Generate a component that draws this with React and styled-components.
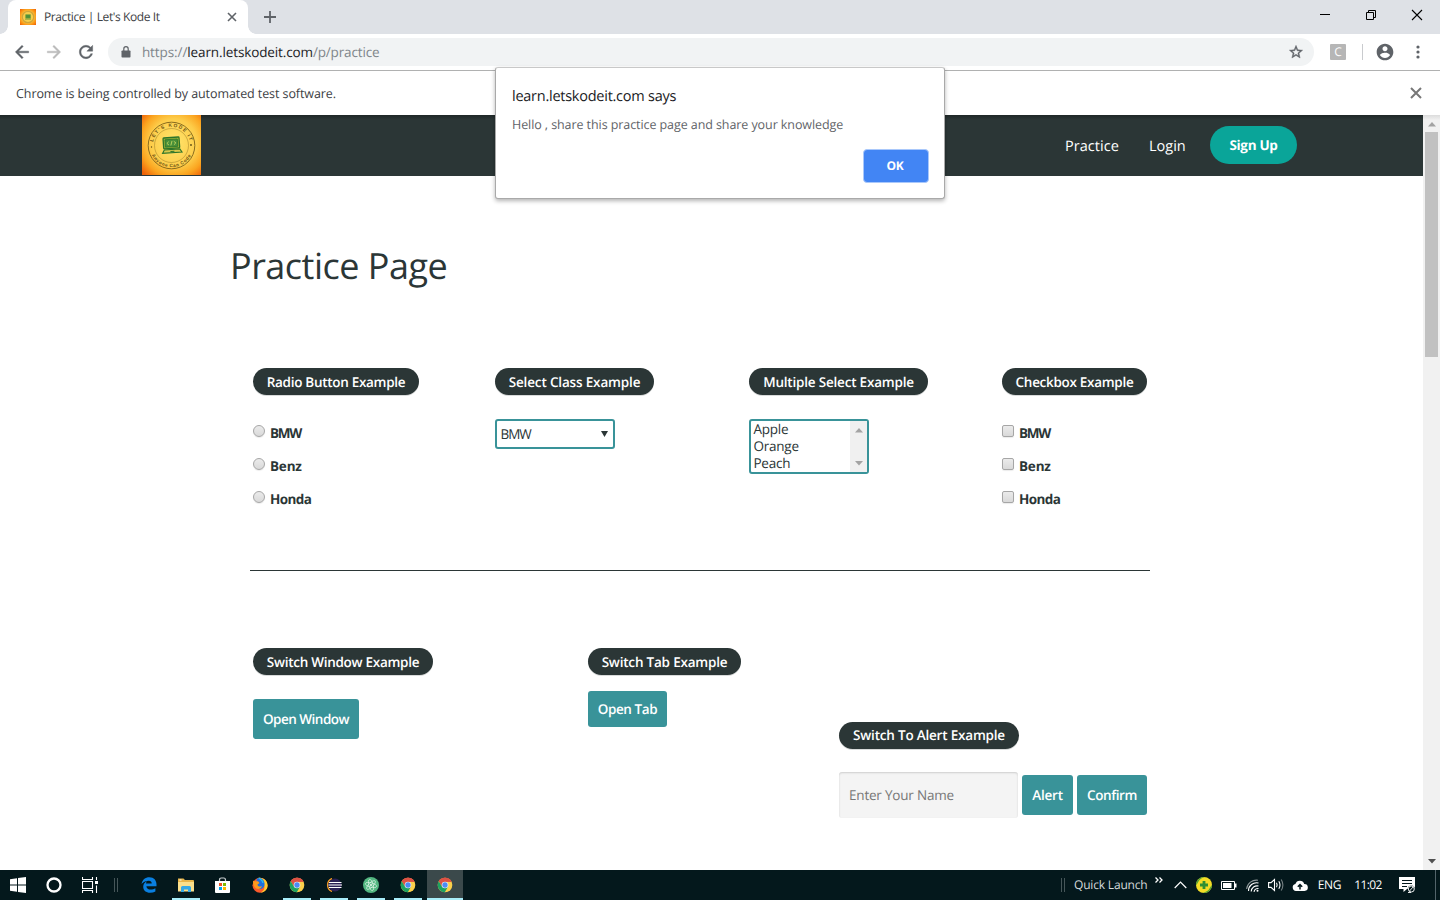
import React from "react";
import styled, { createGlobalStyle, css } from "styled-components";

const ui = `"Open Sans", "Noto Sans", sans-serif`;
const dark = "#2b3636";
const teal = "#399399";

const GlobalStyle = createGlobalStyle`
  * { box-sizing: border-box; }
  body { margin: 0; background: #fff; overflow: hidden; font-family: ${ui}; text-rendering: geometricPrecision; }
  svg { display: block; flex: none; }
`;

const Screen = styled.div`
  position: relative;
  width: 1440px;
  height: 900px;
  display: flex;
  flex-direction: column;
  overflow: hidden;
`;

const Text = styled.span`
  padding-top: ${(p) => p.$drop || 0}px;
  font-size: ${(p) => p.$size || 13}px;
  letter-spacing: ${(p) => p.$ls || 0}px;
  font-weight: ${(p) => p.$weight || 400};
  color: ${(p) => p.$color || "inherit"};
  line-height: ${(p) => p.$lh || "1.3"};
  white-space: pre;
`;

/* ---------- browser frame ---------- */

const TabStrip = styled.div`
  height: 34px;
  flex: none;
  background: #dee1e6;
  display: flex;
  align-items: stretch;
  padding-left: 8px;
`;

const Tab = styled.div`
  position: relative;
  width: 240px;
  background: #fff;
  border-radius: 8px 8px 0 0;
  display: flex;
  align-items: center;
  padding: 0 11px 0 12px;
  &::before, &::after {
    content: "";
    position: absolute;
    bottom: 0;
    width: 8px;
    height: 8px;
  }
  &::before { left: -8px; background: radial-gradient(circle at 0 0, transparent 7.5px, #fff 8px); }
  &::after { right: -8px; background: radial-gradient(circle at 100% 0, transparent 7.5px, #fff 8px); }
`;

const TabTitle = styled.div`
  flex: 1;
  display: flex;
  padding-left: 8px;
  color: #3c4043;
`;

const NewTab = styled.div`
  width: 44px;
  display: flex;
  align-items: center;
  justify-content: center;
`;

const WindowButtons = styled.div`
  margin-left: auto;
  display: flex;
  height: 29px;
`;

const WindowButton = styled.div`
  width: 46px;
  display: flex;
  align-items: center;
  justify-content: center;
`;

const Toolbar = styled.div`
  height: 37px;
  flex: none;
  display: flex;
  align-items: center;
  background: #fff;
  border-bottom: 1px solid #b0b1b1;
`;

const NavIcons = styled.div`
  width: 108px;
  display: flex;
  gap: 12px;
  padding-left: 12px;
`;

const Omnibox = styled.div`
  width: 1207px;
  height: 28px;
  border-radius: 14px;
  background: #f1f3f4;
  display: flex;
  align-items: center;
  padding: 0 10px 0 12px;
  gap: 10px;
`;

const Url = styled.div`
  flex: 1;
  display: flex;
  color: #80868b;
`;

const Extension = styled.div`
  width: 16px;
  height: 16px;
  margin-left: 16px;
  border-radius: 1px;
  background: #b6b6b6;
  color: #fff;
  font-size: 12px;
  line-height: 16px;
  text-align: center;
`;

const ToolbarRule = styled.div`
  width: 1px;
  height: 16px;
  margin: 0 12px 0 16px;
  background: #c9cbce;
`;

const MenuDots = styled.div`
  width: 45px;
  display: flex;
  justify-content: center;
`;

const InfoBar = styled.div`
  height: 44px;
  flex: none;
  display: flex;
  align-items: center;
  justify-content: space-between;
  padding: 0 18px 0 16px;
  color: #3c4043;
  background: #fff;
`;

const Dialog = styled.div`
  position: absolute;
  left: 495px;
  top: 67px;
  width: 450px;
  height: 132px;
  padding: 20px 15px 15px 16px;
  display: flex;
  flex-direction: column;
  background: #fff;
  border: 1px solid #a9a9a9;
  border-top-color: #c8c8c8;
  border-radius: 3px;
  box-shadow: 0 2px 4px rgba(0, 0, 0, 0.3);
`;

const OkButton = styled.div`
  align-self: flex-end;
  width: 66px;
  height: 34px;
  margin-top: auto;
  padding-right: 2px;
  border-radius: 4px;
  border: 1px solid #a9c8fb;
  background: #4285f4;
  color: #fff;
  display: flex;
  align-items: center;
  justify-content: center;
`;

/* ---------- web page ---------- */

const Viewport = styled.div`
  height: 755px;
  flex: none;
  display: flex;
`;

const Page = styled.div`
  width: 1423px;
  height: 755px;
  overflow: hidden;
`;

const Header = styled.div`
  height: 61px;
  display: flex;
  align-items: center;
  padding: 0 126px 0 142px;
  color: #fff;
  background: linear-gradient(#1f2727 0, ${dark} 5px);
`;

const LogoSlot = styled.div`
  height: 61px;
`;

const HeaderLinks = styled.div`
  margin-left: auto;
  padding-bottom: 1px;
  display: flex;
  align-items: center;
`;

const HeaderLink = styled.div`
  width: ${(p) => p.$w}px;
  display: flex;
`;

const SignUp = styled.div`
  width: 87px;
  height: 38px;
  border-radius: 19px;
  background: #0aa599;
  display: flex;
  align-items: center;
  justify-content: center;
`;

const Title = styled.h1`
  margin: 62px 0 0 230px;
  height: 57px;
  font-size: 36px;
  font-weight: 400;
  line-height: 56px;
  letter-spacing: -0.5px;
  color: ${dark};
`;

const TopRow = styled.div`
  width: 900px;
  height: 276px;
  margin-left: 250px;
  padding: 73px 0 0 3px;
  display: grid;
  grid-template-columns: 242px 254px 253px 145px;
  border-bottom: 1px solid ${dark};
`;

const BottomRow = styled.div`
  width: 900px;
  margin-left: 250px;
  padding: 77px 0 0 3px;
  display: grid;
  grid-template-columns: 335px 251px 308px;
`;

const Column = styled.div`
  display: flex;
  flex-direction: column;
  align-items: flex-start;
  padding-top: ${(p) => p.$drop || 0}px;
`;

const Legend = styled.div`
  width: ${(p) => p.$w}px;
  height: 27px;
  border-radius: 14px;
  background: ${dark};
  color: #fff;
  display: flex;
  align-items: center;
  justify-content: center;
  box-shadow: 0 1px 0 #d8dada;
`;

const Options = styled.div`
  margin-top: 21px;
  display: flex;
  flex-direction: column;
`;

const Option = styled.div`
  height: 33px;
  display: flex;
  align-items: center;
  gap: 5px;
  color: ${dark};
`;

const Mark = styled.span`
  width: 12px;
  height: 12px;
  margin-bottom: 3px;
  border: 1px solid #a6a6a6;
  border-radius: ${(p) => (p.$round ? "50%" : "2px")};
  background: linear-gradient(#ebebeb, #d9d9d9);
  box-shadow: 0 1px 1px rgba(0, 0, 0, 0.08);
`;

const SelectBox = styled.div`
  width: 120px;
  height: 30px;
  margin-top: 24px;
  padding: 0 5.5px 0 3.5px;
  border: 2px solid ${teal};
  border-radius: 3px;
  display: flex;
  align-items: center;
  justify-content: space-between;
  color: ${dark};
`;

const ListBox = styled.div`
  width: 120px;
  height: 55px;
  margin-top: 24px;
  border: 2px solid ${teal};
  border-radius: 3px;
  display: flex;
  justify-content: space-between;
  color: ${dark};
`;

const ListItems = styled.div`
  display: flex;
  flex-direction: column;
  padding-left: 2.5px;
`;

const ListScroll = styled.div`
  width: 17px;
  padding: 7px 0 6px;
  background: #f0f0f0;
  display: flex;
  flex-direction: column;
  align-items: center;
  justify-content: space-between;
`;

const Button = styled.div`
  width: ${(p) => p.$w}px;
  height: ${(p) => p.$h || 40}px;
  margin-top: ${(p) => p.$mt || 0}px;
  border-radius: 3px;
  background: ${teal};
  color: #fff;
  display: flex;
  align-items: center;
  justify-content: center;
`;

const AlertForm = styled.div`
  margin-top: 23px;
  display: flex;
  align-items: center;
  gap: 4px;
`;

const NameField = styled.div`
  width: 179px;
  height: 46px;
  padding-left: 10px;
  display: flex;
  align-items: center;
  border-radius: 3px;
  background: #f4f4f4;
  box-shadow: inset 0 1px 2px rgba(0, 0, 0, 0.16);
  color: #777;
`;

const Scrollbar = styled.div`
  width: 17px;
  padding: 7px 0 6px;
  background: linear-gradient(#dcdcdc 0, #f1f1f1 5px);
  display: flex;
  flex-direction: column;
  align-items: center;
`;

const Thumb = styled.div`
  width: 13px;
  height: 225px;
  margin: 5px 0 auto;
  background: #c1c1c1;
`;

/* ---------- taskbar ---------- */

const Taskbar = styled.div`
  height: 30px;
  flex: none;
  display: flex;
  justify-content: space-between;
  background: #04181c;
  color: #fff;
`;

const TaskGroup = styled.div`
  display: flex;
`;

const TaskItem = styled.div`
  width: ${(p) => p.$w || 37}px;
  height: 30px;
  display: flex;
  align-items: center;
  justify-content: center;
  ${(p) => p.$active && css`background: #3b494b; margin-left: 1px;`}
  ${(p) =>
    p.$open &&
    css`
      background-image: linear-gradient(#a9eefa, #a9eefa);
      background-repeat: no-repeat;
      background-position: center bottom;
      background-size: ${p.$active ? "100%" : "28px"} 2px;
    `}
`;

const BarsSlot = styled.div`
  width: 22px;
  padding: 8px 0 0 5px;
`;

const Tray = styled.div`
  display: grid;
  grid-template-columns: 14px 78px 18px 20px 28px 21px 27px 20px 28px 31px 46px 32px 17px;
  align-items: center;
  justify-items: center;
`;

const TrayLabel = styled.div`
  justify-self: start;
  display: flex;
`;

const Chevrons = styled.div`
  align-self: start;
  justify-self: start;
  padding: 7px 0 0 3px;
`;

const DesktopEdge = styled.div`
  width: 1px;
  height: 30px;
  margin-left: 8px;
  background: #53646a;
`;

/* ---------- drawings ---------- */

function KodeLogo() {
  return (
    <svg width="59" height="60" viewBox="0 0 59 60">
      <defs>
        <radialGradient id="sun" cx="0.54" cy="0.46" r="0.72">
          <stop offset="0" stopColor="#ffe56d" />
          <stop offset="0.55" stopColor="#fdcd4a" />
          <stop offset="0.78" stopColor="#fba520" />
          <stop offset="1" stopColor="#ef6208" />
        </radialGradient>
        <path id="arcTop" d="M10.8 30.5a18.700 18.700 0 0 1 37.400 0" />
        <path id="arcBottom" d="M7.600 30.5a21.900 21.900 0 0 0 43.800 0" />
      </defs>
      <rect width="59" height="60" fill="url(#sun)" />
      <g fill="none" stroke="#8a6c1e">
        <circle cx="29.5" cy="30.5" r="23.3" strokeWidth="1" />
        <circle cx="29.5" cy="30.5" r="17" strokeWidth="0.6" opacity="0.7" />
      </g>
      <g fill="#6b5214" fontFamily="Liberation Sans, sans-serif" fontWeight="700" fontSize="4.800">
        <text letterSpacing="1.300"><textPath href="#arcTop" startOffset="50%" textAnchor="middle">LET'S KODE IT</textPath></text>
        <text fontSize="4.600" letterSpacing="0.600"><textPath href="#arcBottom" startOffset="50%" textAnchor="middle">Anyone Can Code</textPath></text>
      </g>
      <circle cx="9.5" cy="32" r="0.7" fill="#5f4b12" />
      <circle cx="49" cy="30" r="0.9" fill="#5f4b12" />
      <g transform="rotate(-4 29 30)" fill="none" stroke="#2c742a" strokeWidth="1.3">
        <rect x="21.5" y="22.5" width="16" height="11" rx="0.8" fill="#a3b93a" />
        <rect x="23.3" y="24.4" width="12.4" height="7.4" fill="#49903a" strokeWidth="0.8" />
        <path d="M22 34.5h15.5l2 3.3H20zM28 36.4h4" fill="#d8c84a" strokeWidth="1.1" />
        <path d="M27 26.5l-2 1.7 2 1.7M32 26.5l2 1.7-2 1.7M30.3 26l-1.5 4.4" stroke="#cfdc61" strokeWidth="0.8" />
      </g>
    </svg>
  );
}

function Favicon() {
  return (
    <svg width="16" height="16" viewBox="0 0 16 16">
      <defs>
        <radialGradient id="fav" r="0.7">
          <stop offset="0.4" stopColor="#fbd34b" />
          <stop offset="0.75" stopColor="#fa9414" />
          <stop offset="1" stopColor="#ef5c06" />
        </radialGradient>
      </defs>
      <rect width="16" height="16" fill="url(#fav)" />
      <circle cx="8" cy="8" r="5.7" fill="#f5ce4d" stroke="#cfa53a" strokeWidth="1.2" />
      <path d="M5.7 5.7h4.8v3.6H5.7zM5 10.3h6" fill="#4c913a" stroke="#77a23d" strokeWidth="0.7" />
    </svg>
  );
}

const Cross = ({ size = 8, color = "#5f6368", width = 1.6 }) => (
  <svg width={size + 2} height={size + 2} viewBox={`-1 -1 ${size + 2} ${size + 2}`}>
    <path d={`M0 0L${size} ${size}M${size} 0L0 ${size}`} stroke={color} strokeWidth={width} />
  </svg>
);

const Material = ({ d, size = 20, color = "#5f6368", bold = 0 }) => (
  <svg width={size} height={size} viewBox="0 0 24 24" fill={color} stroke={color} strokeWidth={bold}>
    <path d={d} />
  </svg>
);

const Triangle = ({ down, color = "#a3a3a3" }) => (
  <svg width="8" height="5" viewBox="0 0 8 5">
    <path d={down ? "M0 0h8L4 4.5z" : "M0 4.5h8L4 0z"} fill={color} />
  </svg>
);

const Chrome = () => (
  <svg width="16" height="16" viewBox="0 0 48 48">
    <circle cx="24" cy="24" r="22" fill="#fcd04b" />
    <path d="M24 24L5 12.9A22 22 0 0 1 43.5 14H24z" fill="#dd5144" />
    <path d="M24 14H43.5A22 22 0 0 0 5 12.9L15.3 29z" fill="#dd5144" />
    <path d="M5 12.9A22 22 0 0 0 23.5 46L32.7 29 24 34 15.3 29z" fill="#1da260" />
    <circle cx="24" cy="24" r="10" fill="#f1f1f1" />
    <circle cx="24" cy="24" r="8" fill="#4c8bf5" />
  </svg>
);

const Bars = () => (
  <svg width="5" height="14" viewBox="0 0 5 14">
    <path d="M1.5 0v14M4.5 0v14" stroke="#465659" />
  </svg>
);

const WindowsLogo = () => (
  <svg width="16" height="16" viewBox="0 0 16 16" fill="#fff">
    <path d="M0 2.3L7 1.3V7.6H0zM8 1.1L16 0V7.6H8zM0 8.5H7V14.8L0 13.8zM8 8.5H16V16L8 14.9z" />
  </svg>
);

const TaskView = () => (
  <svg width="16" height="16" viewBox="0 0 16 16" fill="none" stroke="#fff" strokeWidth="1.1">
    <path d="M.5 0v2.500h10V0M.5 16v-2.500h10V16M.5 4.500h10v7H.5zM14.500 0v3M14.500 8.500V16" />
    <path d="M13 4h3v3h-3z" fill="#fff" stroke="none" />
  </svg>
);

const Edge = () => (
  <svg width="16" height="16" viewBox="0 0 16 16">
    <path fill="#0a7fe0" d="M.6 7C1.2 2.8 4.2.2 8.4.2c4.600 0 7.100 3.200 7.100 7.400v1.600H5.400c.1 2.200 2 3.400 4.300 3.400 1.800 0 3.300-.5 4.700-1.300v3.300c-1.500.8-3.300 1.200-5.300 1.200-4.100 0-6.900-2.300-6.900-6 0-2.500 1.400-4.500 3.700-5.600-.5.700-.8 1.400-.9 2.300h5.700c0-1.700-1-2.700-2.900-2.700-2.700 0-5.300 1.200-7.200 3.200z" />
  </svg>
);

const Explorer = () => (
  <svg width="16" height="14" viewBox="0 0 16 14">
    <path d="M0 .5h5.500l1.500 1.500H15a1 1 0 0 1 1 1V13H0z" fill="#e9b64a" />
    <path d="M0 4h16v9.500H0z" fill="#fbdf8b" />
    <path d="M3 14V9.500A1.500 1.500 0 0 1 4.500 8h7A1.500 1.500 0 0 1 13 9.500V14h-3v-2.500H6V14z" fill="#35a9e6" />
    <path d="M1.500 1.500h2v1h-2z" fill="#fff" />
  </svg>
);

const Store = () => (
  <svg width="15" height="16" viewBox="0 0 15 16">
    <path d="M4.500 5V3q0-2 1.800-2h2.400q1.800 0 1.800 2v2" fill="none" stroke="#c8ced0" strokeWidth="1.2" />
    <path d="M0 4h15v11q0 1-1 1H1q-1 0-1-1z" fill="#fff" />
    <path d="M4 6h3v3H4z" fill="#f25022" />
    <path d="M8 6h3v3H8z" fill="#7fba00" />
    <path d="M4 10h3v3H4z" fill="#00a4ef" />
    <path d="M8 10h3v3H8z" fill="#ffb900" />
  </svg>
);

const Firefox = () => (
  <svg width="16" height="16" viewBox="0 0 16 16">
    <circle cx="8" cy="8.300" r="7.500" fill="#fb5a2b" />
    <path d="M6 .8C12 0 16 4 15.600 9c-.3 4-3.500 6.500-7 6.600 3-1.200 4.400-4 3.600-7C11.800 5 9 5 6 .8z" fill="#ffcb2f" />
    <path d="M5 1.500c3-1.500 6.700.2 7.500 4.500.5 3.500-1.500 6-4.500 6S3.500 10 4 7z" fill="#1d6fe0" />
    <path d="M1 3.500C2.500 5 4 4 6 4.200L7.500 6 5.500 7.500c0 2 2.500 2.700 4.500 1.500-1 3.500-5.500 4-7.500 1C1.200 8 1 6 1 3.500z" fill="#ff9a1c" />
    <path d="M7 1c1.500 1.500 3.500 2 4 5" stroke="#28c0f0" fill="none" strokeWidth="1.200" />
  </svg>
);

const Eclipse = () => (
  <svg width="16" height="14" viewBox="0 0 16 14">
    <path d="M6 .5A7 7 0 0 0 6 13.500" fill="none" stroke="#f39a26" strokeWidth="1.400" />
    <circle cx="9" cy="7" r="6.500" fill="#2c2255" />
    <path d="M3 4.500h12.500M2.500 7H16M3 9.500h12.500" stroke="#fff" strokeWidth="1.200" />
  </svg>
);

const Atom = () => (
  <svg width="16" height="16" viewBox="0 0 16 16">
    <circle cx="8" cy="8" r="8" fill="#53b781" />
    <g fill="none" stroke="#dff3e7" strokeWidth="0.7">
      <ellipse cx="8" cy="8" rx="5.800" ry="2.200" transform="rotate(15 8 8)" />
      <ellipse cx="8" cy="8" rx="5.800" ry="2.200" transform="rotate(75 8 8)" />
      <ellipse cx="8" cy="8" rx="5.800" ry="2.200" transform="rotate(135 8 8)" />
    </g>
    <circle cx="8" cy="8" r="0.9" fill="#fff" />
  </svg>
);

const Quick = () => (
  <svg width="8" height="6" viewBox="0 0 8 6">
    <path d="M.5.5L3 3 .5 5.500M4.500.5L7 3 4.500 5.500" fill="none" stroke="#fff" strokeWidth="1.300" />
  </svg>
);

const CaretUp = () => (
  <svg width="13" height="8" viewBox="0 0 13 8">
    <path d="M.7 7L6.500 1.200 12.300 7" fill="none" stroke="#fff" strokeWidth="1.200" />
  </svg>
);

const Shield = () => (
  <svg width="16" height="16" viewBox="0 0 16 16">
    <circle cx="8" cy="8" r="8" fill="#f4dc26" />
    <path d="M0 8A8 8 0 0 1 9 .1Q4 1.500 2.500 4.500T0 8zM16 8A8 8 0 0 1 7 15.900Q12 14.500 13.500 11.500T16 8z" fill="#4da136" />
    <path d="M8 4v8M4 8h8" stroke="#2f8f33" strokeWidth="2.800" />
  </svg>
);

const Battery = () => (
  <svg width="16" height="9" viewBox="0 0 16 9">
    <path d="M.5.5h13v8H.5z" fill="none" stroke="#fff" />
    <path d="M2 2h8.500v5H2zM14 2.500h1.500v4H14z" fill="#fff" />
  </svg>
);

const Wifi = () => (
  <svg width="13" height="13" viewBox="0 0 13 13" fill="none" stroke="#fff" strokeWidth="1.100">
    <path d="M.6 10A10 10 0 0 1 12 1.200" opacity="0.55" />
    <path d="M2.500 12A8 8 0 0 1 12.500 4M5.200 12.500A6 6 0 0 1 12.500 7M8 12.800A4 4 0 0 1 12.500 9.500" />
    <circle cx="11.500" cy="11.800" r="1" fill="#fff" stroke="none" />
  </svg>
);

const Speaker = () => (
  <svg width="17" height="14" viewBox="0 0 17 14" fill="none" stroke="#fff" strokeWidth="1.100">
    <path d="M.6 4.600H3L6.500 1.500v11L3 9.400H.6z" />
    <path d="M8.500 4.800q1.300 2.200 0 4.400M10.800 3.200q2.400 3.800 0 7.600" />
    <path d="M13.200 1.500q3.400 5.500 0 11" opacity="0.45" />
  </svg>
);

const Cloud = () => (
  <svg width="16" height="11" viewBox="0 0 16 11">
    <path d="M4 11a3.500 3.500 0 0 1-.6-6.900A4.600 4.600 0 0 1 12.200 4 3.500 3.500 0 0 1 12.500 11z" fill="#fff" />
    <path d="M8 9.500V5M5.800 6.700L8 4.500l2.200 2.200" fill="none" stroke="#04181c" strokeWidth="1.500" />
  </svg>
);

const Notifications = () => (
  <svg width="17" height="16" viewBox="0 0 17 16">
    <path d="M0 0h16v12H8l-3.500 3v-3H0z" fill="#fff" />
    <path d="M3 3.500h10M3 6.500h10M3 9.500h5" stroke="#04181c" strokeWidth="1" />
    <circle cx="12.300" cy="12" r="3.600" fill="#04181c" />
    <circle cx="12.300" cy="12" r="3" fill="none" stroke="#fff" strokeWidth="0.900" />
    <path d="M10.500 14l4-4.500M9 15.500h3" stroke="#fff" strokeWidth="0.900" />
  </svg>
);

/* ---------- composition ---------- */

const Caption = ({ w, ls = -0.2, drop = 2, children }) => (
  <Legend $w={w}>
    <Text $size={13.5} $weight={600} $ls={ls} $drop={drop}>{children}</Text>
  </Legend>
);

const ButtonText = ({ ls, children }) => (
  <Text $size={13.5} $weight={600} $ls={ls} $drop={2}>{children}</Text>
);

const optionSpacing = { BMW: -1.3, Benz: -0.2, Honda: -0.6 };

const Choices = ({ round }) => (
  <Options>
    {["BMW", "Benz", "Honda"].map((name) => (
      <Option key={name}>
        <Mark $round={round} />
        <Text $size={13.5} $weight={700} $ls={optionSpacing[name]} $drop={2}>{name}</Text>
      </Option>
    ))}
  </Options>
);

export default function App() {
  return (
    <Screen>
      <GlobalStyle />
      <TabStrip>
        <Tab>
          <Favicon />
          <TabTitle><Text $size={12} $ls={-0.4}>Practice | Let's Kode It</Text></TabTitle>
          <Cross />
        </Tab>
        <NewTab>
          <svg width="12" height="12" viewBox="0 0 12 12"><path d="M6 0v12M0 6h12" stroke="#5f6368" strokeWidth="1.800" /></svg>
        </NewTab>
        <WindowButtons>
          <WindowButton><svg width="10" height="1"><path d="M0 .5h10" stroke="#000" /></svg></WindowButton>
          <WindowButton>
            <svg width="10" height="10" viewBox="0 0 10 10" fill="none" stroke="#000"><path d="M.5 2.500h7v7h-7zM2.500 2.500v-2h7v7h-2" /></svg>
          </WindowButton>
          <WindowButton><Cross size={10} color="#000" width={1.1} /></WindowButton>
        </WindowButtons>
      </TabStrip>

      <Toolbar>
        <NavIcons>
          <Material bold={0.5} d="M20 11H7.830l5.590-5.590L12 4l-8 8 8 8 1.410-1.410L7.830 13H20v-2z" />
          <Material bold={0.5} color="#bababa" d="M12 4l-1.410 1.410L16.170 11H4v2h12.170l-5.580 5.590L12 20l8-8z" />
          <Material bold={0.5} d="M17.650 6.350C16.200 4.900 14.210 4 12 4c-4.420 0-7.990 3.580-7.990 8s3.570 8 7.990 8c3.730 0 6.840-2.550 7.730-6h-2.080c-.82 2.330-3.040 4-5.650 4-3.310 0-6-2.690-6-6s2.690-6 6-6c1.660 0 3.140.69 4.220 1.780L13 11h7V4l-2.350 2.350z" />
        </NavIcons>
        <Omnibox>
          <svg width="12" height="12" viewBox="0 0 12 12">
            <path d="M2.300 4.500h7.400q.8 0 .8.800v5.400q0 .8-.8.800H2.300q-.8 0-.8-.8V5.300q0-.8.800-.8z" fill="#5f6368" />
            <path d="M3.800 5V2.900a2.200 2.200 0 0 1 4.400 0V5" fill="none" stroke="#5f6368" strokeWidth="1.200" />
          </svg>
          <Url>
            <Text $size={13.500} $drop={1} $ls={-0.08}>https://</Text>
            <Text $size={13.500} $drop={1} $ls={-0.12} $color="#202124">learn.letskodeit.com</Text>
            <Text $size={13.500} $drop={1} $ls={-0.15}>/p/practice</Text>
          </Url>
          <Material size={16} bold={0.6} d="M22 9.240l-7.190-.62L12 2 9.190 8.630 2 9.240l5.460 4.730L5.820 21 12 17.270 18.180 21l-1.630-7.030L22 9.240zM12 15.400l-3.760 2.270 1-4.280-3.320-2.880 4.380-.38L12 6.100l1.710 4.040 4.380.38-3.320 2.880 1 4.280L12 15.400z" />
        </Omnibox>
        <Extension>C</Extension>
        <ToolbarRule />
        <Material d="M12 2C6.480 2 2 6.480 2 12s4.480 10 10 10 10-4.480 10-10S17.520 2 12 2zm0 3c1.660 0 3 1.340 3 3s-1.340 3-3 3-3-1.340-3-3 1.340-3 3-3zm0 14.200c-2.500 0-4.710-1.280-6-3.220.03-1.990 4-3.080 6-3.080 1.990 0 5.970 1.090 6 3.080-1.290 1.940-3.500 3.220-6 3.220z" />
        <MenuDots>
          <svg width="4" height="14" viewBox="0 0 4 14" fill="#5f6368"><circle cx="2" cy="2" r="1.600" /><circle cx="2" cy="7" r="1.600" /><circle cx="2" cy="12" r="1.600" /></svg>
        </MenuDots>
      </Toolbar>

      <InfoBar>
        <Text $size={12.500} $ls={-0.08} $drop={2}>Chrome is being controlled by automated test software.</Text>
        <Cross size={10} color="#777" width={2} />
      </InfoBar>

      <Viewport>
        <Page>
          <Header>
            <LogoSlot><KodeLogo /></LogoSlot>
            <HeaderLinks>
              <HeaderLink $w={84}><Text $size={14.500} $weight={500} $ls={0.05} $drop={4}>Practice</Text></HeaderLink>
              <HeaderLink $w={61}><Text $size={14.500} $weight={500} $drop={4}>Login</Text></HeaderLink>
              <SignUp><Text $size={13.500} $weight={700} $ls={-0.3} $drop={2}>Sign Up</Text></SignUp>
            </HeaderLinks>
          </Header>
          <Title>Practice Page</Title>
          <TopRow>
            <Column>
              <Caption w={166} ls={-0.3}>Radio Button Example</Caption>
              <Choices round />
            </Column>
            <Column>
              <Caption w={159} ls={-0.16}>Select Class Example</Caption>
              <SelectBox>
                <Text $size={13.500} $ls={-1} $drop={2}>BMW</Text>
                <svg width="7" height="6" viewBox="0 0 7 6"><path d="M0 0h7L3.500 6z" fill={dark} /></svg>
              </SelectBox>
            </Column>
            <Column>
              <Caption w={179}>Multiple Select Example</Caption>
              <ListBox>
                <ListItems>
                  {["Apple", "Orange", "Peach"].map((fruit) => (
                    <Text key={fruit} $size={13.500} $ls={-0.25} $lh="17px">{fruit}</Text>
                  ))}
                </ListItems>
                <ListScroll><Triangle /><Triangle down /></ListScroll>
              </ListBox>
            </Column>
            <Column>
              <Caption w={145} ls={-0.3}>Checkbox Example</Caption>
              <Choices />
            </Column>
          </TopRow>
          <BottomRow>
            <Column>
              <Caption w={180} ls={-0.28}>Switch Window Example</Caption>
              <Button $w={106} $mt={24}><ButtonText ls={-0.5}>Open Window</ButtonText></Button>
            </Column>
            <Column>
              <Caption w={153}>Switch Tab Example</Caption>
              <Button $w={79} $h={36} $mt={16}><ButtonText ls={-0.4}>Open Tab</ButtonText></Button>
            </Column>
            <Column $drop={74}>
              <Caption w={180} drop={0}>Switch To Alert Example</Caption>
              <AlertForm>
                <NameField><Text $size={13.500} $ls={-0.2} $drop={2}>Enter Your Name</Text></NameField>
                <Button $w={51}><ButtonText ls={-0.2}>Alert</ButtonText></Button>
                <Button $w={70}><ButtonText ls={-0.4}>Confirm</ButtonText></Button>
              </AlertForm>
            </Column>
          </BottomRow>
        </Page>
        <Scrollbar>
          <Triangle />
          <Thumb />
          <Triangle down color="#505050" />
        </Scrollbar>
      </Viewport>

      <Taskbar>
        <TaskGroup>
          <TaskItem $w={36}><WindowsLogo /></TaskItem>
          <TaskItem $w={36}><svg width="16" height="16" viewBox="0 0 16 16"><circle cx="8" cy="8" r="6.500" fill="none" stroke="#fff" strokeWidth="2.300" /></svg></TaskItem>
          <TaskItem $w={36}><TaskView /></TaskItem>
          <BarsSlot><Bars /></BarsSlot>
          <TaskItem><Edge /></TaskItem>
          <TaskItem $open><Explorer /></TaskItem>
          <TaskItem><Store /></TaskItem>
          <TaskItem><Firefox /></TaskItem>
          <TaskItem $open><Chrome /></TaskItem>
          <TaskItem $open><Eclipse /></TaskItem>
          <TaskItem $open><Atom /></TaskItem>
          <TaskItem $open><Chrome /></TaskItem>
          <TaskItem $w={36} $open $active><Chrome /></TaskItem>
        </TaskGroup>
        <Tray>
          <TrayLabel><Bars /></TrayLabel>
          <TrayLabel><Text $size={12} $ls={-0.18} $color="#d5dadb">Quick Launch</Text></TrayLabel>
          <Chevrons><Quick /></Chevrons>
          <CaretUp />
          <Shield />
          <Battery />
          <Wifi />
          <Speaker />
          <Cloud />
          <Text $size={12} $ls={-0.3}>ENG</Text>
          <Text $size={12} $ls={-0.6}>11:02</Text>
          <Notifications />
          <DesktopEdge />
        </Tray>
      </Taskbar>

      <Dialog>
        <Text $size={14.500} $ls={-0.25} $color="#202124">learn.letskodeit.com says</Text>
        <Text $size={12.500} $ls={-0.08} $color="#5f6368" $lh="36px">Hello , share this practice page and share your knowledge</Text>
        <OkButton><Text $size={12} $weight={700} $ls={-0.3}>OK</Text></OkButton>
      </Dialog>
    </Screen>
  );
}
